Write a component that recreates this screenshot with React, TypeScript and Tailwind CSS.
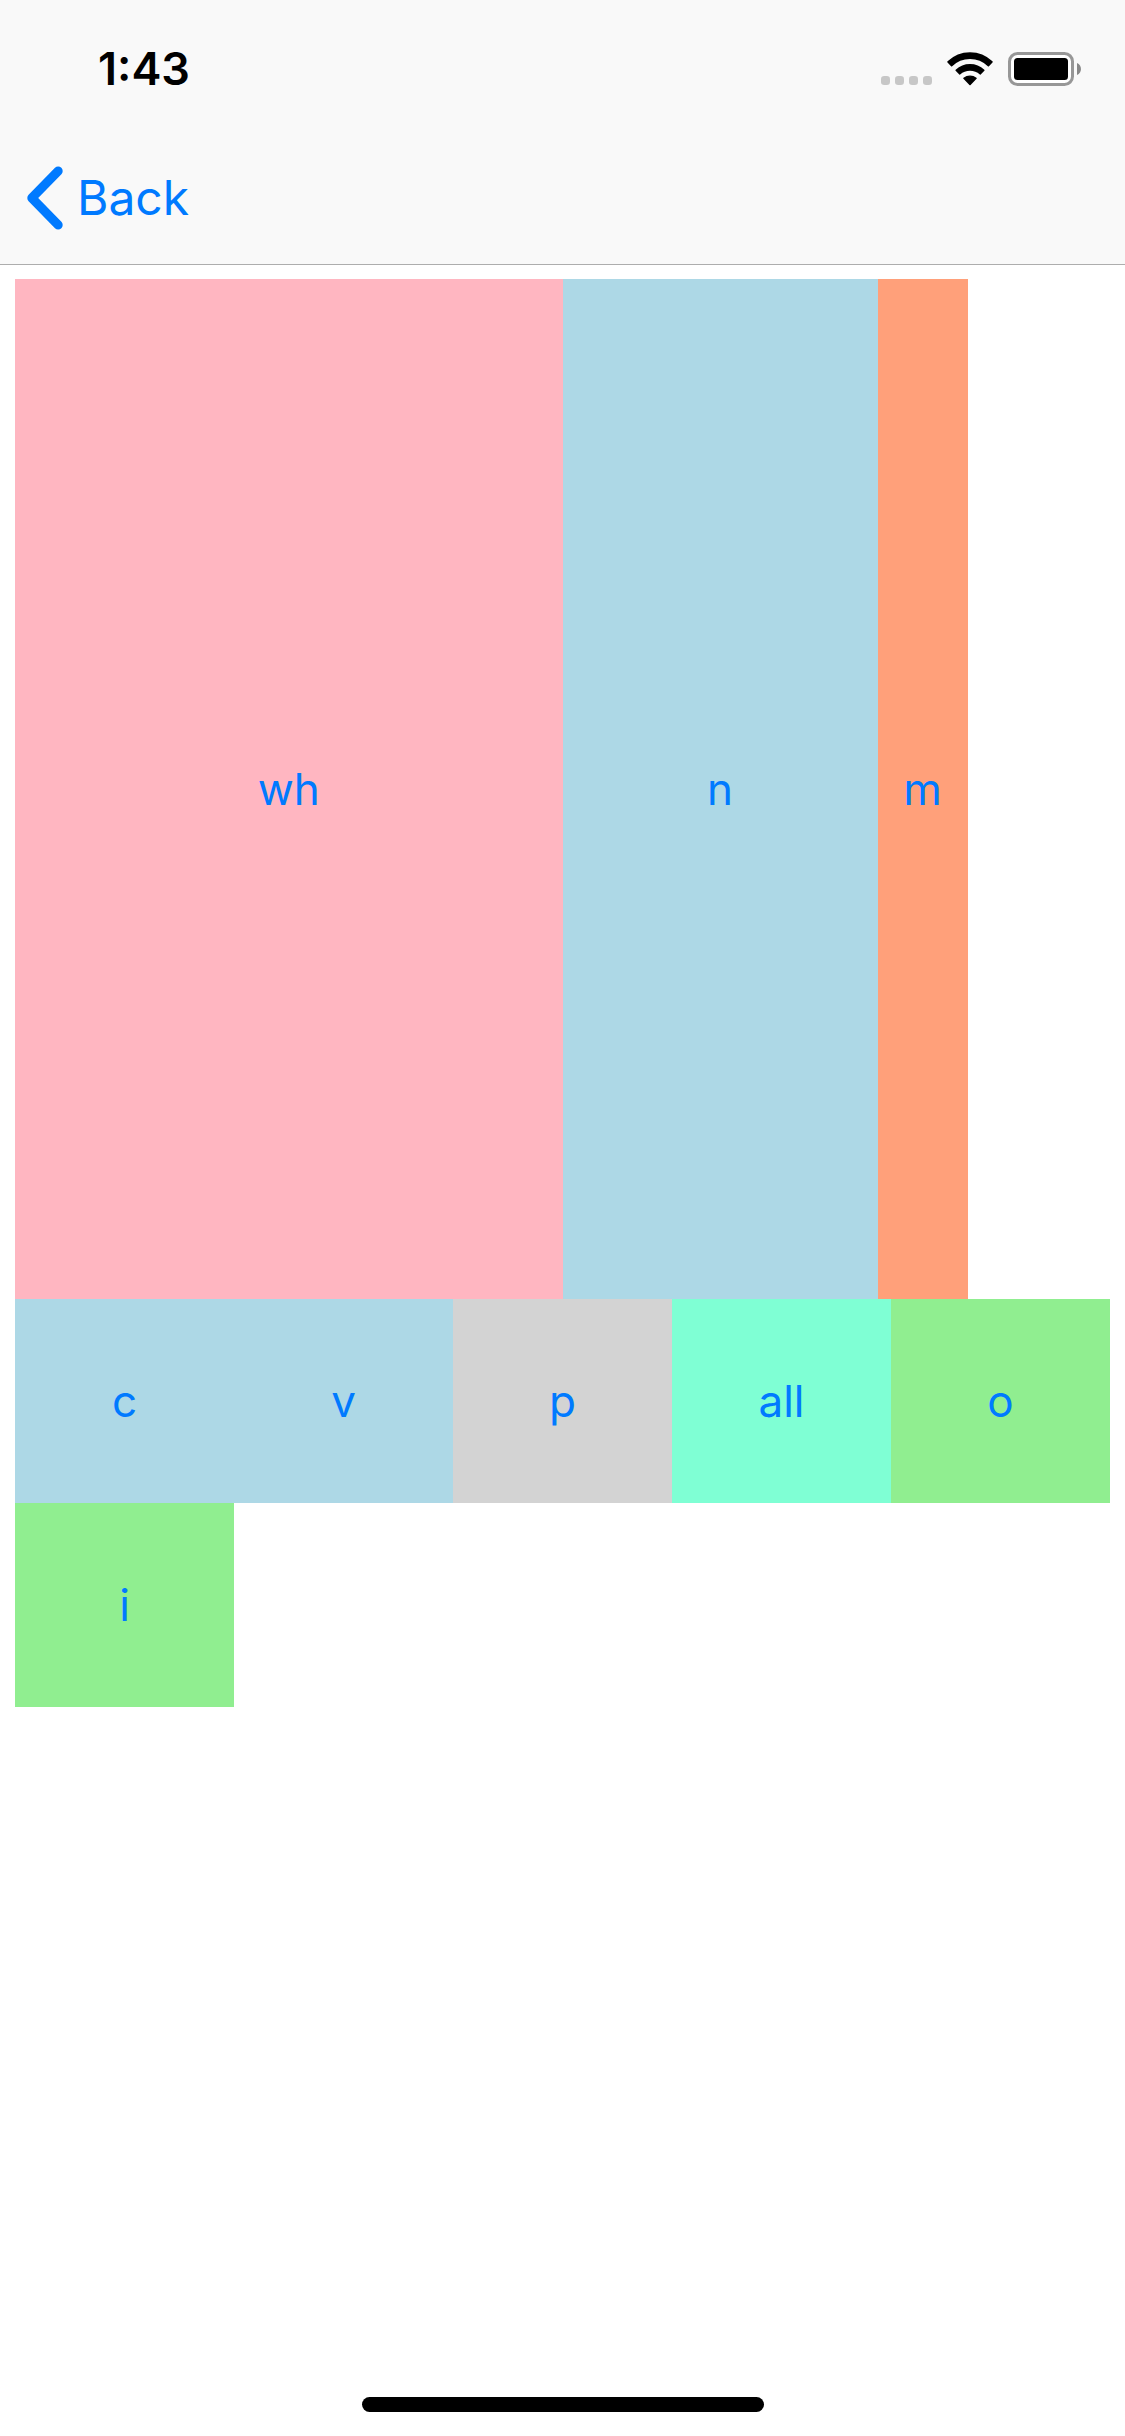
function StatusIcons() {
  return (
    <div className="flex items-center" aria-hidden="true">
      <svg className="h-9 w-[52px]" viewBox="0 0 52 36" fill="#c7c7c7">
        <rect x="0" y="25" width="9" height="9" rx="3.2" />
        <rect x="14" y="25" width="9" height="9" rx="3.2" />
        <rect x="28" y="25" width="9" height="9" rx="3.2" />
        <rect x="42" y="25" width="9" height="9" rx="3.2" />
      </svg>
      <svg
        className="ml-3.5 h-9 w-[46px]"
        viewBox="0 0 46 36"
        fill="#000"
        stroke="#000"
        strokeWidth="1.6"
        strokeLinejoin="round"
      >
        <path d="M1.1 10.9A31.4 31.4 0 0 1 44.9 10.9L41.4 14.6A26.4 26.4 0 0 0 4.6 14.6Z" />
        <path d="M9.2 19.3A20.4 20.4 0 0 1 36.8 19.3L33.4 22.8A15.6 15.6 0 0 0 12.6 22.8Z" />
        <path d="M17 27.3A9.8 9.8 0 0 1 29 27.3L23 33.4Z" />
      </svg>
      <svg className="ml-[15px] h-9 w-[74px]" viewBox="0 0 74 36">
        <rect x="1.5" y="2.5" width="63" height="31" rx="8" fill="#fff" stroke="#979797" strokeWidth="3" />
        <rect x="6" y="7" width="54" height="22" rx="3.5" fill="#000" />
        <path d="M69 12C74.3 14 74.3 22 69 24Z" fill="#888" />
      </svg>
    </div>
  );
}

function Header() {
  return (
    <header className="border-b border-[#adadad] bg-[#f9f9f9]">
      <div className="flex h-[132px] items-start justify-between pt-[51px] pr-[43px] pl-[98px]">
        <time className="text-[45px] leading-9 font-semibold text-black">1:43</time>
        <StatusIcons />
      </div>
      <nav className="flex h-[132px] items-center pl-6">
        <button type="button" className="flex items-center gap-3 text-[48px] leading-[60px] text-[#007aff]">
          <svg className="h-[66px] w-[41px]" viewBox="0 0 41 66" fill="none" aria-hidden="true">
            <path
              d="M34.2 6L7.8 33L34.2 60"
              stroke="#007aff"
              strokeWidth="9"
              strokeLinecap="round"
              strokeLinejoin="round"
            />
          </svg>
          Back
        </button>
      </nav>
    </header>
  );
}

const cell = "flex items-center justify-center";

const tiles = [
  { label: "c", color: "bg-[#add8e6]" },
  { label: "v", color: "bg-[#add8e6]" },
  { label: "p", color: "bg-[#d3d3d3]" },
  { label: "all", color: "bg-[#7fffd4]" },
  { label: "o", color: "bg-[#90ee90]" },
  { label: "i", color: "bg-[#90ee90]" },
];

export default function App() {
  return (
    <div className="flex min-h-screen flex-col bg-white font-['Inter','Liberation_Sans',sans-serif]">
      <Header />
      <main className="grid flex-1 grid-cols-5 grid-rows-[5fr_1fr_1fr_3fr] px-[15px] pt-3.5 pb-[15px] text-[44px] leading-[54px] text-[#007aff]">
        <div className="col-span-5 flex">
          <button type="button" className={`${cell} w-1/2 bg-[#ffb6c1]`}>wh</button>
          <button type="button" className={`${cell} w-[315px] bg-[#add8e6]`}>n</button>
          <button type="button" className={`${cell} w-[90px] bg-[#ffa07a]`}>m</button>
        </div>
        {tiles.map((tile) => (
          <button key={tile.label} type="button" className={`${cell} ${tile.color}`}>
            {tile.label}
          </button>
        ))}
      </main>
      <footer className="flex h-[102px] items-end justify-center pb-6">
        <div className="h-[15px] w-[402px] rounded-full bg-black" />
      </footer>
    </div>
  );
}
